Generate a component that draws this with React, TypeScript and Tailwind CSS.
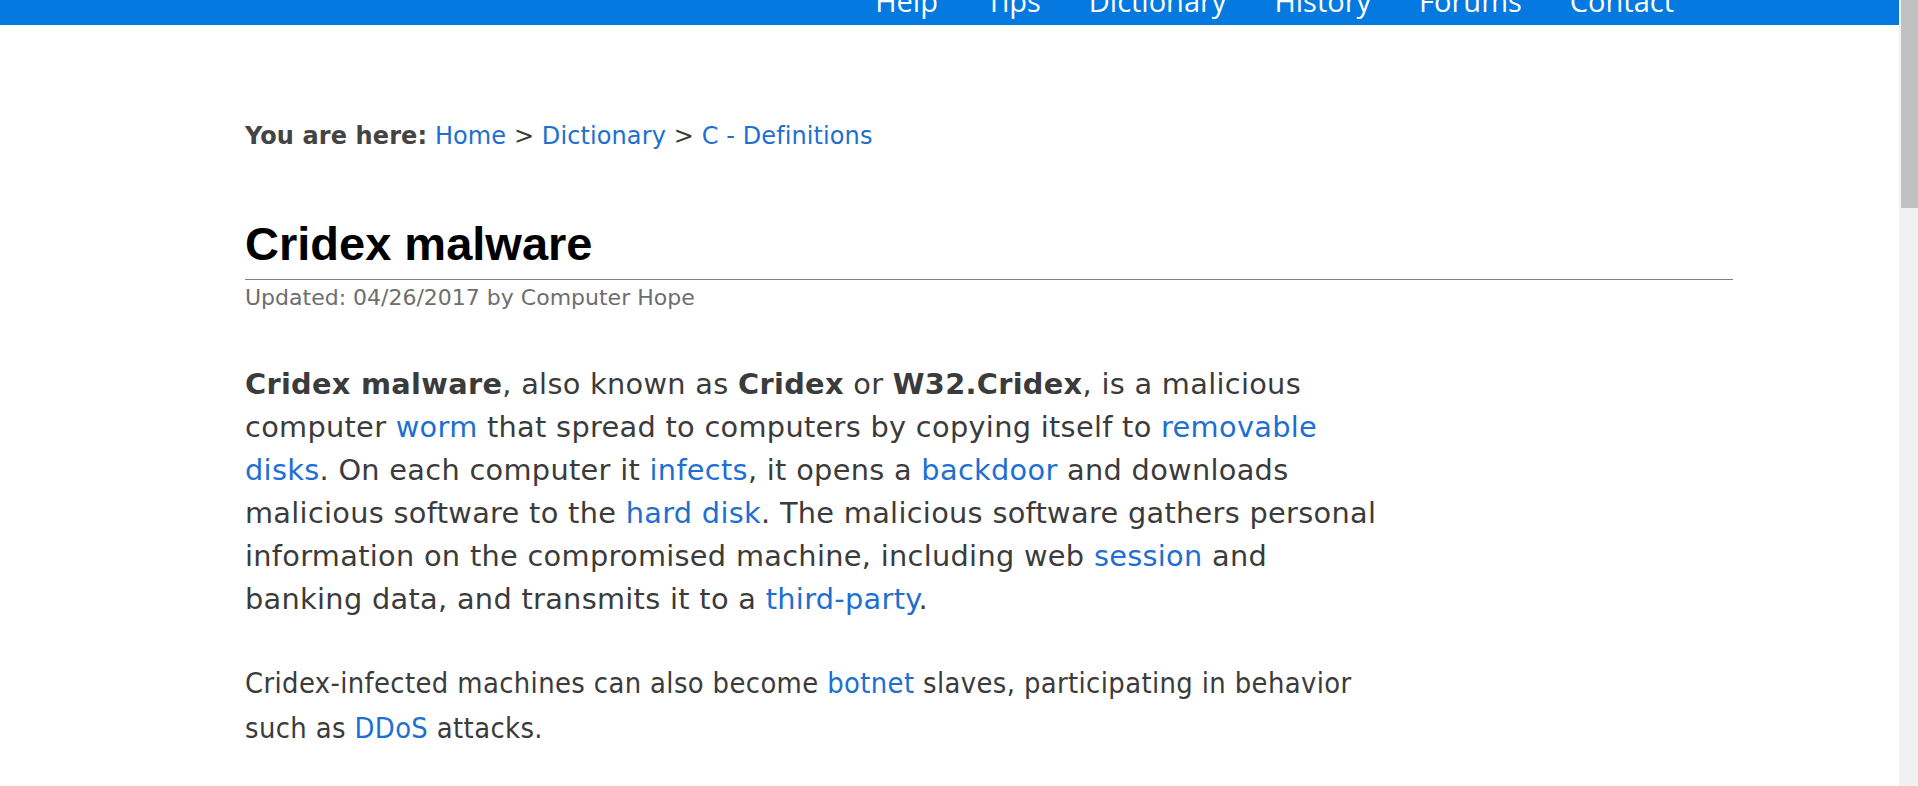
import React from 'react';

const navLinks = ['Help', 'Tips', 'Dictionary', 'History', 'Forums', 'Contact'];

const Link: React.FC<{ children: React.ReactNode }> = ({ children }) => (
  <a href="#" className="text-[#1d6fd1] no-underline">
    {children}
  </a>
);

export default function App() {
  return (
    <div className="flex h-[786px] overflow-hidden bg-white">
      <div className="min-w-0 flex-1">
        {/* top nav, page is scrolled so only the lower part shows */}
        <header className="h-[25px] overflow-hidden bg-[#0479e0]">
          <nav className="mt-[-14px] flex justify-end gap-[48px] pr-[225px] font-['Open_Sans',sans-serif] text-[29px] leading-[29px] text-white">
            {navLinks.map((l) => (
              <a key={l} href="#" className="whitespace-nowrap">
                {l}
              </a>
            ))}
          </nav>
        </header>

        <main className="pl-[245px] pr-[166px] font-['DejaVu_Sans',Verdana,sans-serif] text-[#3b3b3b]">
          <div className="mt-[93px] text-[24px] leading-[36px] tracking-[0.1px]">
            <b className="font-bold text-[#444]">You are here:</b> <Link>Home</Link> &gt; <Link>Dictionary</Link> &gt;{' '}
            <Link>C - Definitions</Link>
          </div>

          <h1 className="mt-[62px] border-b border-[#808080] pb-[7px] font-['Liberation_Sans',Arial,sans-serif] text-[47px] font-bold leading-[56px] text-black">
            Cridex malware
          </h1>
          <div className="mt-[4px] text-[22px] leading-[28px] text-[#6e6e6e]">Updated: 04/26/2017 by Computer Hope</div>

          <div className="w-[1134px]">
            <p className="mt-[51px] text-[28.8px] leading-[43px] tracking-[0.3px]">
              <b>Cridex malware</b>, also known as <b>Cridex</b> or <b>W32.Cridex</b>, is a malicious computer{' '}
              <Link>worm</Link> that spread to computers by copying itself to <Link>removable disks</Link>. On each
              computer it <Link>infects</Link>, it opens a <Link>backdoor</Link> and downloads malicious software to the{' '}
              <Link>hard disk</Link>. The malicious software gathers personal information on the compromised machine,
              including web <Link>session</Link> and banking data, and transmits it to a <Link>third-party</Link>.
            </p>
            <p className="mt-[40px] font-['DejaVu_Sans_Condensed','DejaVu_Sans',sans-serif] text-[28.8px] leading-[45px] tracking-[0.38px] font-stretch-condensed">
              Cridex-infected machines can also become <Link>botnet</Link> slaves, participating in behavior such as{' '}
              <Link>DDoS</Link> attacks.
            </p>
          </div>
        </main>
      </div>

      {/* browser scrollbar */}
      <div className="flex w-[19px] shrink-0 justify-end bg-[#f1f1f1]">
        <div className="h-[208px] w-[17px] bg-[#c1c1c1]" />
      </div>
    </div>
  );
}
